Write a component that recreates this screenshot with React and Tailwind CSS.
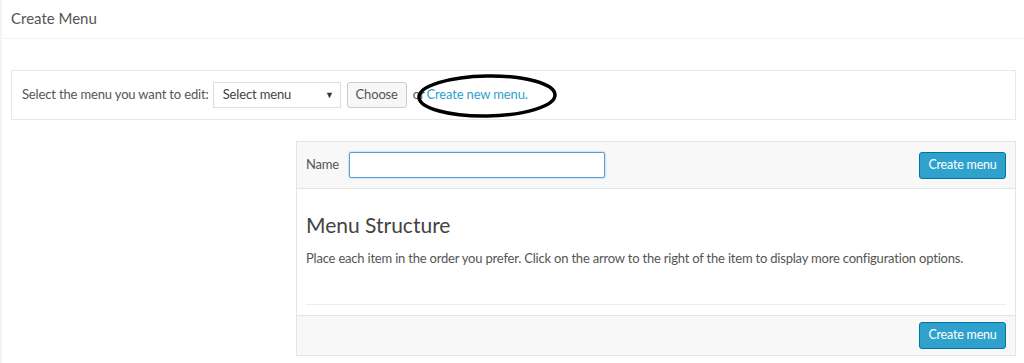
import React from "react";

const App = () => {
  return (
    <div
      className="min-h-[363px] bg-white border-l-2 border-[#f3f3f3] text-[#555]"
      style={{ fontFamily: "Lato, 'Open Sans', sans-serif" }}
    >
      {/* Page header */}
      <div className="h-[39px] border-b border-[#f2f2f2] pl-[9px] pt-[8px]">
        <h1 className="text-[15px] leading-[20px] text-[#555]">Create Menu</h1>
      </div>

      <div className="pl-[9px] pr-[8px] pt-[31px]">
        {/* Select menu bar */}
        <div className="relative flex items-center h-[50px] border border-[#e8e8e8] px-[10px] text-[13px] tracking-[-0.15px]">
          <span className="mr-[4px]">Select the menu you want to edit:</span>
          <div className="flex items-center justify-between w-[128px] h-[26px] border border-[#ddd] bg-white pl-[9px] pr-[6px]">
            <span className="text-[#444]">Select menu</span>
            <span className="text-[9px] text-[#333]">▼</span>
          </div>
          <button className="ml-[6px] h-[26px] w-[60px] rounded-[3px] border border-[#ccc] bg-[#f7f7f7] text-[#555]">
            Choose
          </button>
          <span className="ml-[6px]">or</span>
          <a className="ml-[2px] text-[#2ea2cc]">Create new menu.</a>
          {/* hand-drawn highlight */}
          <svg
            className="absolute left-[404px] top-[2px] pointer-events-none"
            width="142"
            height="46"
            viewBox="0 0 142 46"
          >
            <ellipse
              cx="71"
              cy="23"
              rx="68"
              ry="20"
              fill="none"
              stroke="#000"
              strokeWidth="3.5"
              transform="rotate(-1 71 23)"
            />
          </svg>
        </div>

        <div className="flex pt-[21px]">
          <div className="w-[285px] shrink-0" />

          {/* Menu editor */}
          <div className="flex-1 border border-[#e5e5e5] text-[13px] tracking-[-0.2px]">
            <div className="flex items-center justify-between h-[47px] bg-[#f8f8f8] border-b border-[#e5e5e5] px-[9px]">
              <div className="flex items-center">
                <label className="mr-[10px]">Name</label>
                <input
                  className="w-[256px] h-[26px] border border-[#5b9dd9] rounded-[2px] bg-white shadow-[0_0_2px_rgba(30,140,190,0.6)] outline-none"
                  type="text"
                />
              </div>
              <button className="h-[27px] w-[87px] rounded-[3px] border border-[#0074a2] bg-[#2ea2cc] text-white text-[12.5px]">
                Create menu
              </button>
            </div>

            <div className="px-[9px] pt-[22px] pb-[10px] bg-white">
              <h2 className="text-[21px] leading-[28px] text-[#444] tracking-normal">
                Menu Structure
              </h2>
              <p className="mt-[9px] leading-[20px] text-[#555]">
                Place each item in the order you prefer. Click on the arrow to
                the right of the item to display more configuration options.
              </p>
              <div className="mt-[36px] border-b border-[#eee]" />
            </div>

            <div className="flex items-center justify-end h-[40px] bg-[#f8f8f8] border-t border-[#e5e5e5] px-[9px]">
              <button className="h-[27px] w-[87px] rounded-[3px] border border-[#0074a2] bg-[#2ea2cc] text-white text-[12.5px]">
                Create menu
              </button>
            </div>
          </div>
        </div>
      </div>
    </div>
  );
};

export default App;
